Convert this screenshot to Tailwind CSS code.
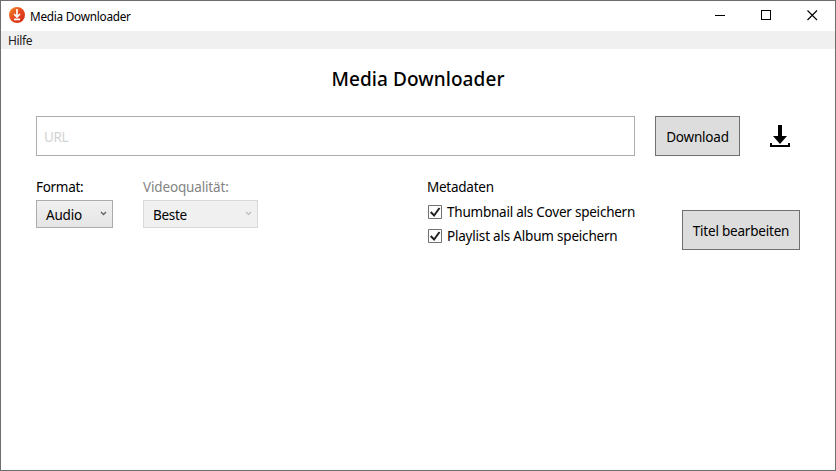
<!DOCTYPE html>
<html lang="de">
<head>
<meta charset="utf-8">
<title>Media Downloader</title>
<script src="https://cdn.jsdelivr.net/npm/@tailwindcss/browser@4"></script>
</head>
<body class="bg-white">
<div class="flex h-[471px] w-[836px] flex-col overflow-hidden border border-[#6e6e6e] bg-white font-['Noto_Sans',sans-serif] text-[13.5px] leading-5 whitespace-nowrap text-black">
  <header class="flex h-[30px] shrink-0 items-center pl-2">
    <svg class="-mt-0.5 size-4" viewBox="0 0 16 16"><defs><linearGradient id="o" x1="0" y1="0" x2="1" y2="1"><stop stop-color="#f58a24"/><stop offset=".5" stop-color="#e4481f"/><stop offset="1" stop-color="#d02a1a"/></linearGradient></defs><circle cx="8" cy="8" r="8" fill="url(#o)"/><path d="M8 2v8M5 7l3 3 3-3M5 12.3h6" fill="none" stroke="#fff" stroke-width="1.7"/></svg>
    <span class="ml-[5px] text-[11.75px] tracking-[-0.24px]">Media Downloader</span>
    <div class="ml-auto flex h-full items-center gap-[35px] pr-[17px]">
      <svg class="-mt-0.5 size-[11px]" viewBox="0 0 11 11"><path d="M0 5.5h10" stroke="#000" shape-rendering="crispEdges"/></svg>
      <svg class="-mt-0.5 size-[11px]" viewBox="0 0 11 11"><path d="M.5.5h9v9h-9z" fill="none" stroke="#000" shape-rendering="crispEdges"/></svg>
      <svg class="-mt-0.5 size-[11px]" viewBox="0 0 11 11"><path d="M.5.5l9.5 9.5M10 .5L.5 10" stroke="#000" stroke-width="1.1"/></svg>
    </div>
  </header>
  <nav class="flex h-[18px] shrink-0 items-center bg-[#f0f0f0] pt-0.5 pl-[7px] text-[12px] tracking-[-0.35px] text-[#212121]"><span>Hilfe</span></nav>
  <main class="flex flex-col px-[35px]">
    <h1 class="mt-4 h-7 text-center text-[19px] leading-7 font-medium tracking-[0.08px]">Media Downloader</h1>
    <div class="mt-[23px] flex h-10 items-center">
      <div class="flex h-10 w-[599px] items-center border border-[#abadb3] pt-0.5 pl-[7px] tracking-[-0.4px] text-[#d3d3d3]">URL</div>
      <button class="ml-5 flex h-10 w-[85px] items-center justify-center border border-[#707070] bg-[#ddd] pt-0.5 tracking-[-0.2px]">Download</button>
      <svg class="ml-[30px] h-[22px] w-5" viewBox="0 0 20 22"><path d="M8 0h4v11h5l-7 8-7-8h5zM0 18h2v2h16v-2h2v4H0z"/></svg>
    </div>
    <div class="mt-5 flex">
      <section class="w-[107px]">
        <div class="h-6 pt-px tracking-[-0.3px]">Format:</div>
        <div class="flex h-7 w-[77px] items-center justify-between border border-[#acacac] bg-linear-to-b from-[#f0f0f0] to-[#e5e5e5] pr-[5px] pl-[9px] tracking-[-0.2px]"><span class="pt-0.5">Audio</span><svg class="h-1.5 w-[7px]" viewBox="0 0 7 6"><path d="M1 1l2.5 2.5L6 1" fill="none" stroke="#606060" stroke-width="1.3"/></svg></div>
      </section>
      <section class="w-[284px]">
        <div class="h-6 pt-px tracking-[-0.15px] text-[#838383]">Videoqualität:</div>
        <div class="flex h-7 w-[115px] items-center justify-between border border-[#d9d9d9] bg-[#f0f0f0] pr-[5px] pl-[9px] tracking-[-0.3px]"><span class="pt-0.5">Beste</span><svg class="h-1.5 w-[7px]" viewBox="0 0 7 6"><path d="M1 1l2.5 2.5L6 1" fill="none" stroke="#bfbfbf" stroke-width="1.3"/></svg></div>
      </section>
      <section class="w-[255px]">
        <div class="h-6 pt-px tracking-[-0.25px]">Metadaten</div>
        <label class="flex h-6 items-center gap-[5px] pl-px tracking-[-0.23px]"><svg class="size-3.5 shrink-0" viewBox="0 0 14 14"><path d="M.5.5h13v13H.5z" fill="#fff" stroke="#707070"/><path d="M2.7 7l3.4 3.5L11.5 3" fill="none" stroke="#212121" stroke-width="2"/></svg><span>Thumbnail als Cover speichern</span></label>
        <label class="flex h-6 items-center gap-[5px] pl-px tracking-[-0.2px]"><svg class="size-3.5 shrink-0" viewBox="0 0 14 14"><path d="M.5.5h13v13H.5z" fill="#fff" stroke="#707070"/><path d="M2.7 7l3.4 3.5L11.5 3" fill="none" stroke="#212121" stroke-width="2"/></svg><span>Playlist als Album speichern</span></label>
      </section>
      <button class="mt-[34px] flex h-10 w-[118px] items-center justify-center border border-[#707070] bg-[#ddd] pt-0.5 tracking-[-0.2px]">Titel bearbeiten</button>
    </div>
  </main>
</div>
</body>
</html>
